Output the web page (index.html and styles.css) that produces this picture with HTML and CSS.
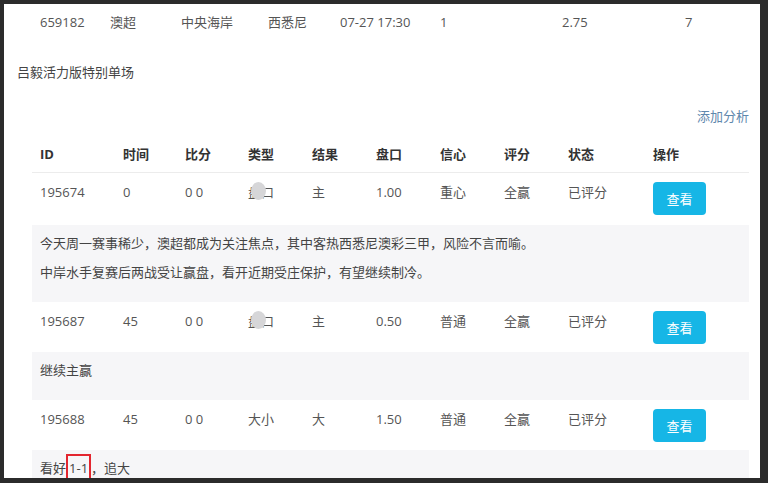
FILE: index.html
```html
<!DOCTYPE html>
<html lang="zh-CN">
<head>
    <meta charset="UTF-8">
    <meta name="viewport" content="width=device-width, initial-scale=1.0">
    <title>吕毅活力版特别单场</title>
    <link rel="stylesheet" href="styles.css">
</head>
<body>
    <div class="panel">
        <!-- 比赛信息 -->
        <table class="match">
            <colgroup>
                <col style="width: 70px"><col style="width: 71px"><col style="width: 87px"><col style="width: 72px">
                <col style="width: 100px"><col style="width: 122px"><col style="width: 123px"><col style="width: 72px">
            </colgroup>
            <tr>
                <td>659182</td>
                <td>澳超</td>
                <td>中央海岸</td>
                <td>西悉尼</td>
                <td>07-27 17:30</td>
                <td>1</td>
                <td>2.75</td>
                <td>7</td>
            </tr>
        </table>

        <div class="title">吕毅活力版特别单场</div>

        <div class="actions"><a href="#">添加分析</a></div>

        <!-- 分析列表 -->
        <table class="list">
            <colgroup>
                <col style="width: 83px"><col style="width: 62px"><col style="width: 63px"><col style="width: 64px"><col style="width: 64px">
                <col style="width: 64px"><col style="width: 64px"><col style="width: 64px"><col style="width: 85px"><col style="width: 104px">
            </colgroup>
            <thead>
                <tr>
                    <th>ID</th><th>时间</th><th>比分</th><th>类型</th><th>结果</th>
                    <th>盘口</th><th>信心</th><th>评分</th><th>状态</th><th>操作</th>
                </tr>
            </thead>
            <tbody>
                <tr class="row first">
                    <td>195674</td><td>0</td><td>0 0</td><td><span class="masked">盘口</span></td><td>主</td>
                    <td>1.00</td><td>重心</td><td>全赢</td><td>已评分</td><td class="op"><button>查看</button></td>
                </tr>
                <tr class="note">
                    <td colspan="10">
                        <p>今天周一赛事稀少，澳超都成为关注焦点，其中客热西悉尼澳彩三甲，风险不言而喻。</p>
                        <p>中岸水手复赛后两战受让赢盘，看开近期受庄保护，有望继续制冷。</p>
                    </td>
                </tr>
                <tr class="row">
                    <td>195687</td><td>45</td><td>0 0</td><td><span class="masked">盘口</span></td><td>主</td>
                    <td>0.50</td><td>普通</td><td>全赢</td><td>已评分</td><td class="op"><button>查看</button></td>
                </tr>
                <tr class="note">
                    <td colspan="10"><p>继续主赢</p></td>
                </tr>
                <tr class="row">
                    <td>195688</td><td>45</td><td>0 0</td><td>大小</td><td>大</td>
                    <td>1.50</td><td>普通</td><td>全赢</td><td>已评分</td><td class="op"><button>查看</button></td>
                </tr>
                <tr class="note">
                    <td colspan="10"><p>看好<span class="mark">1-1</span>，追大</p></td>
                </tr>
            </tbody>
        </table>
    </div>
</body>
</html>
```

FILE: styles.css
```css
body {
    margin: 0;
    padding: 4px 8px 0 4px;
    background-color: #2b2b2b;
    font-family: "Open Sans", "Noto Sans CJK SC", sans-serif;
    font-size: 13px;
    color: #555;
    overflow: hidden;
}

.panel {
    background-color: #fff;
    height: 474px;
    overflow: hidden;
}

table {
    border-collapse: collapse;
    table-layout: fixed;
}

td, th {
    padding: 0 8px;
    text-align: left;
    line-height: 18px;
    white-space: nowrap;
}

.match {
    margin: 9px 0 0 28px;
    width: 717px;
}

.title {
    margin: 32px 0 0 13px;
    line-height: 18px;
    color: #444;
}

.actions {
    margin: 26px 11px 0 0;
    text-align: right;
    line-height: 18px;
}

.actions a {
    color: #5f88ad;
    text-decoration: none;
}

.list {
    margin: 11px 0 0 28px;
    width: 717px;
}

.list th {
    padding-top: 9px;
    padding-bottom: 9px;
    color: #333;
    font-weight: bold;
    border-bottom: 1px solid #ececec;
}

.row td {
    vertical-align: top;
    padding-top: 10px;
    height: 40px;
}

.row.first td {
    height: 42px;
}

.row td.op {
    padding-top: 9px;
}

button {
    background-color: #16b6e6;
    border: none;
    border-radius: 4px;
    color: white;
    width: 53px;
    height: 33px;
    padding: 0;
    font-family: inherit;
    font-size: 13px;
    cursor: pointer;
}

.note td {
    background-color: #f6f6f8;
    padding: 4px 8px 15px;
    color: #444;
}

.note p {
    margin: 0;
    line-height: 29px;
}

.masked {
    position: relative;
}

.masked::after {
    content: "";
    position: absolute;
    left: 3px;
    top: -1px;
    width: 15px;
    height: 18px;
    border-radius: 50%;
    background-color: #d6d6d8;
}

.mark {
    display: inline-block;
    box-sizing: border-box;
    border: 2px solid #e3262f;
    padding: 0 1px;
    height: 36px;
    line-height: 24px;
    vertical-align: top;
}
```
